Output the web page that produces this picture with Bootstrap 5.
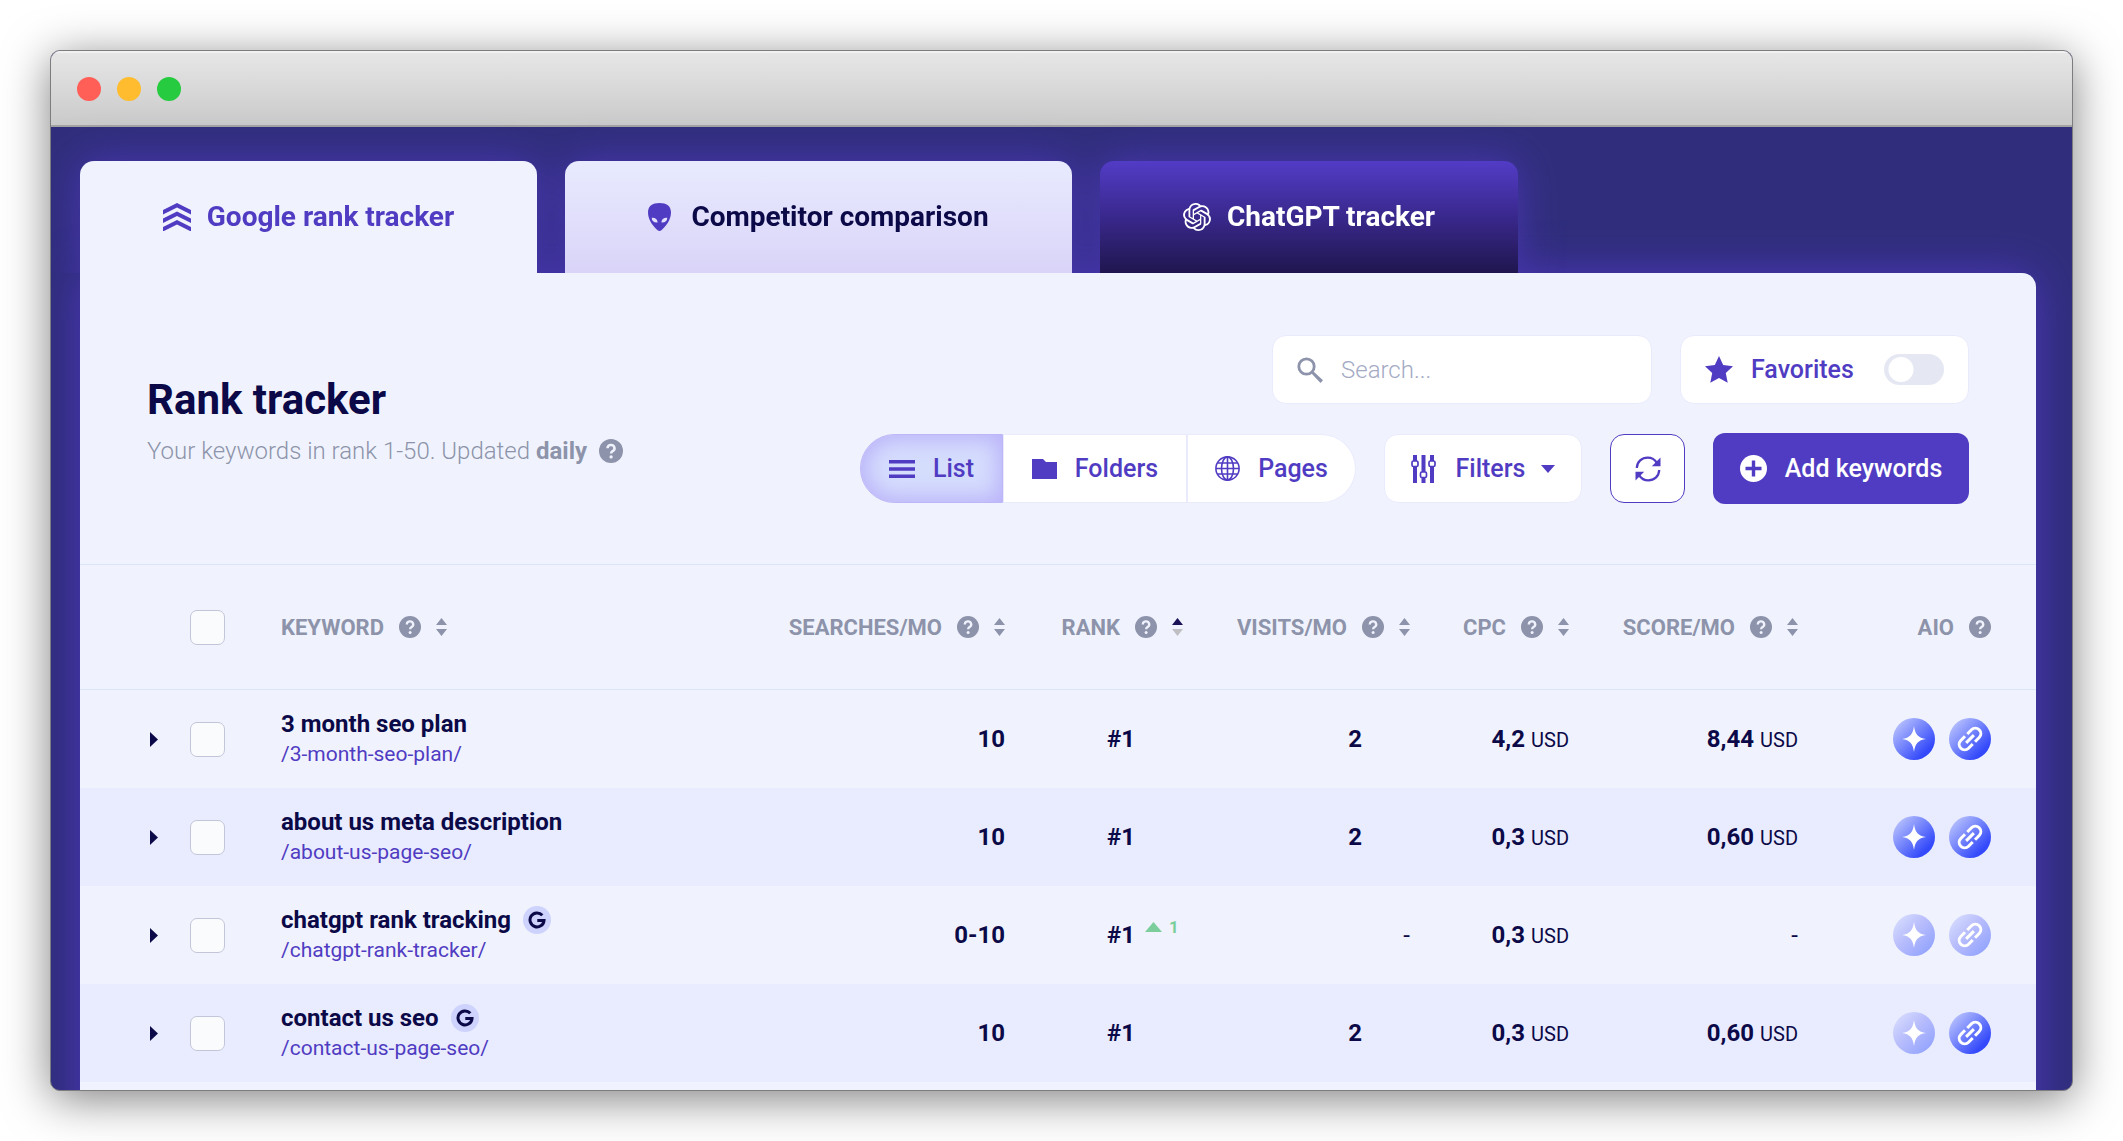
<!DOCTYPE html>
<html lang="en">
<head>
<meta charset="utf-8">
<meta name="viewport" content="width=device-width, initial-scale=1">
<title>Rank tracker</title>
<link href="https://cdn.jsdelivr.net/npm/bootstrap@5.3.0/dist/css/bootstrap.min.css" rel="stylesheet">
<style>
  :root { --violet: #503cc2; --navy: #0b0947; --muted: #8d93aa; --panel: #f0f3fd; --line: #dbe5f9; --edge: #e9ebfd; }
  body { font-family: Roboto, "Liberation Sans", sans-serif; color: var(--navy); background: #fff; padding: 50px; }
  svg { display: block; flex: none; fill: currentColor; }
  .app-window { border: 1px solid #7d7d80; border-radius: 10px; box-shadow: 0 8px 46px rgba(0,0,0,.5); background: #302e7c; }
  .title-bar { height: 76px; padding: 2px 0 0 26px; gap: 16px; background: linear-gradient(#e7e7e7, #cacaca); border-bottom: 2px solid #a3a3a3; box-shadow: inset 0 2px 0 #f1f1f1; }
  .light { width: 24px; height: 24px; border-radius: 50%; }
  .light-red { background: #ff5f57; } .light-amber { background: #febc2e; } .light-green { background: #27cb40; }
  .stage { padding: 34px 36px 0 29px; }
  .tab-strip { gap: 28px; position: relative; z-index: 1; clip-path: inset(-60px -60px 0); filter: drop-shadow(0 0 20px rgba(86,58,206,.65)); }
  .tab-item { height: 112px; gap: 16px; font-size: 28px; font-weight: 700; border-radius: 14px 14px 0 0; text-decoration: none; color: var(--navy); }
  .tab-a { width: 457px; background: var(--panel); color: var(--violet); }
  .tab-b { width: 507px; background: linear-gradient(#e8ebfe, #e0ddfb 60%, #d9d4f8); gap: 20px; }
  .tab-b svg { color: var(--violet); }
  .tab-c { width: 418px; background: linear-gradient(#523cc6, #3c2a92 45%, #20164f); color: #fff; }
  .main-panel { background: var(--panel); border-radius: 0 14px 0 0; box-shadow: 0 0 44px rgba(86,58,206,.75); }
  .panel-head { padding: 62px 67px 60px 67px; border-bottom: 1px solid var(--line); }
  .page-title { font-size: 42px; line-height: 50px; font-weight: 700; margin: 0 0 10px; padding-top: 2px; }
  .subtitle { font-size: 24px; line-height: 32px; font-weight: 300; color: var(--muted); gap: 12px; }
  .subtitle b { font-weight: 700; }
  .muted { color: var(--muted); }
  .tools { gap: 29px; }
  .tool-row { gap: 28px; }
  .tool { height: 69px; background: #fff; border: 1px solid var(--edge); border-radius: 14px; color: var(--violet); font-size: 25px; font-weight: 500; gap: 18px; white-space: nowrap; padding: 0; }
  .search-tool { width: 380px; padding: 0 24px; }
  .search-tool input { font-size: 24px; font-weight: 300; border: 0; outline: 0; min-width: 0; width: 100%; background: none; color: var(--navy); padding: 0; }
  .search-tool input::placeholder { color: #a4aac4; opacity: 1; }
  .fav-tool { width: 289px; padding: 0 24px; }
  .switch { appearance: none; width: 60px; height: 31px; border-radius: 16px; background: radial-gradient(circle at 17px 50%, #fff 12px, #e5e8f2 13px); margin: 0; }
  .seg { height: 69px; }
  .seg .tool { border-radius: 0; }
  .seg .seg-list { width: 143px; border-color: #bdb6f8; border-radius: 35px 0 0 35px; background: #d5ddfd; box-shadow: inset 0 0 22px 4px #b9b0f9; }
  .seg .seg-folders { width: 185px; border-right-width: 2px; }
  .seg .seg-pages { width: 168px; border-left: 0; border-radius: 0 35px 35px 0; }
  .filter-tool { width: 198px; gap: 20px; }
  .refresh-tool { width: 75px; border-color: var(--violet); }
  .add-tool { width: 256px; height: 71px; background: var(--violet); color: #fff; border: 0; border-radius: 12px; }
  .rank-table { width: 100%; table-layout: fixed; border-collapse: separate; border-spacing: 0; }
  .rank-table th { height: 125px; border-bottom: 1px solid var(--line); font-size: 22px; font-weight: 700; color: var(--muted); padding: 0; }
  .rank-table td { height: 98px; padding: 0; font-size: 24px; font-weight: 700; text-align: right; }
  .rank-table tbody tr:nth-child(even) { background: #e9ecfe; }
  .rank-table .last-col { padding-right: 45px; }
  .col-open { width: 110px; } .col-tick { width: 91px; } .col-search { width: 240px; } .col-rank { width: 178px; }
  .col-visits { width: 227px; } .col-cpc { width: 159px; } .col-score { width: 229px; } .col-aio { width: 238px; }
  .head-cell { gap: 15px; }
  .plain-btn { border: 0; background: none; padding: 0; color: inherit; display: block; }
  .tick { appearance: none; display: block; width: 35px; height: 35px; margin: 0; border: 1px solid #c3c6d9; border-radius: 7px; background: #fafbfd; }
  .opener { margin-left: 70px; color: var(--navy); }
  .kw { line-height: 30px; gap: 12px; }
  .kw-url { display: block; text-align: left; font-size: 21px; line-height: 30px; font-weight: 400; color: var(--violet); text-decoration: none; }
  .g-badge { width: 28px; height: 28px; border-radius: 50%; background: #cdd3fc; }
  .tail { width: 48px; }
  .rise { color: #7bce9b; font-size: 17px; line-height: 20px; gap: 7px; padding: 0 0 16px 10px; }
  .unit { font-size: 20px; font-weight: 400; margin-left: 6px; }
  .dash { font-weight: 400; }
  .aio-pair { gap: 14px; }
  .aio { width: 42px; height: 42px; border-radius: 50%; color: #fff; background: linear-gradient(135deg, #bcc5fd 8%, #3349fb 80%); }
  .aio-off { background: linear-gradient(135deg, #d6dcfd 8%, #b8bdfc 45%, #92a3fe 90%); }
</style>
<script src="https://cdn.jsdelivr.net/npm/bootstrap@5.3.0/dist/js/bootstrap.bundle.min.js"></script>
</head>
<body class="vh-100 overflow-hidden">
<svg width="0" height="0" class="position-absolute" aria-hidden="true">
  <symbol id="help" viewBox="0 0 22 22"><circle cx="11" cy="11" r="11"/><path d="M7.8 8.4a3.2 3 0 1 1 4.7 2.7c-1 .6-1.4 1-1.4 2.2" fill="none" stroke="#f0f3fd" stroke-width="2.3"/><circle cx="11.1" cy="16.4" r="1.5" fill="#f0f3fd"/></symbol>
  <symbol id="sort" viewBox="0 0 11 18"><path d="M5.500 0 11 7H0zM5.500 18 0 11h11z"/></symbol>
  <symbol id="open" viewBox="0 0 8 15"><path d="M0 0 8 7.500 0 15z"/></symbol>
  <symbol id="spark" viewBox="0 0 24 26"><path d="M12 0c1.200 8.500 4 11.800 12 13-8 1.200-10.800 4.500-12 13C10.800 17.500 8 14.200 0 13 8 11.800 10.800 8.500 12 0z"/></symbol>
  <symbol id="chain" viewBox="2.500 2.500 19 19"><g fill="none" stroke="currentColor" stroke-width="2.200" transform="rotate(-45 12 12)"><path d="M10.800 16H6.500a4 4 0 0 1 0-8h4.300M13.200 8h4.300a4 4 0 0 1 0 8h-4.300M8 12h8"/></g></symbol>
  <symbol id="gmark" viewBox="0 0 18 18"><path d="M14.300 4.300A7 7 0 1 0 16 9.500H9.300" fill="none" stroke="currentColor" stroke-width="3"/></symbol>
</svg>

<div class="app-window h-100 d-flex flex-column overflow-hidden">
  <div class="title-bar d-flex align-items-center flex-shrink-0">
    <span class="light light-red"></span><span class="light light-amber"></span><span class="light light-green"></span>
  </div>

  <div class="stage">
    <nav class="tab-strip d-flex" aria-label="Trackers">
      <a href="#" class="tab-item tab-a d-flex align-items-center justify-content-center">
        <svg width="28" height="28" viewBox="0 0 28 28"><path d="M14 0 28 7v4.500L14 4.600 0 11.500V7zM14 8.500l14 7V20l-14-6.900L0 20v-4.500zM14 17l14 7v4.500l-14-6.900L0 28.500V24z"/></svg>
        Google rank tracker</a>
      <a href="#" class="tab-item tab-b d-flex align-items-center justify-content-center">
        <svg width="23" height="28" viewBox="0 0 23 28"><path fill-rule="evenodd" d="M11.500 0C18.500 0 23 2.800 23 9.500c0 7.500-5.500 14.300-9.600 17.700a3 3 0 0 1-3.800 0C5.500 23.800 0 17 0 9.500 0 2.800 4.500 0 11.500 0zM3.800 14.800c-.2 3 2 4.900 5.700 4.600.2-3-2.200-4.900-5.700-4.600zm15.400 0c-3.500-.3-5.900 1.600-5.700 4.600 3.700.3 5.900-1.600 5.700-4.600z"/></svg>
        Competitor comparison</a>
      <a href="#" class="tab-item tab-c d-flex align-items-center justify-content-center">
        <svg width="28" height="28" viewBox="0 0 24 24"><path d="M22.2819 9.8211a5.9847 5.9847 0 0 0-.5157-4.9108 6.0462 6.0462 0 0 0-6.5098-2.9A6.0651 6.0651 0 0 0 4.9807 4.1818a5.9847 5.9847 0 0 0-3.9977 2.9 6.0462 6.0462 0 0 0 .7427 7.0966 5.98 5.98 0 0 0 .511 4.9107 6.051 6.051 0 0 0 6.5146 2.9001A5.9847 5.9847 0 0 0 13.2599 24a6.0557 6.0557 0 0 0 5.7718-4.2058 5.9894 5.9894 0 0 0 3.9977-2.9001 6.0557 6.0557 0 0 0-.7475-7.0729zm-9.022 12.6081a4.4755 4.4755 0 0 1-2.8764-1.0408l.1419-.0804 4.7783-2.7582a.7948.7948 0 0 0 .3927-.6813v-6.7369l2.02 1.1686a.071.071 0 0 1 .038.052v5.5826a4.504 4.504 0 0 1-4.4945 4.4944zm-9.6607-4.1254a4.4708 4.4708 0 0 1-.5346-3.0137l.142.0852 4.783 2.7582a.7712.7712 0 0 0 .7806 0l5.8428-3.3685v2.3324a.0804.0804 0 0 1-.0332.0615L9.74 19.9502a4.4992 4.4992 0 0 1-6.1408-1.6464zM2.3408 7.8956a4.485 4.485 0 0 1 2.3655-1.9728V11.6a.7664.7664 0 0 0 .3879.6765l5.8144 3.3543-2.0201 1.1685a.0757.0757 0 0 1-.071 0l-4.8303-2.7865A4.504 4.504 0 0 1 2.3408 7.872zm16.5963 3.8558L13.1038 8.364 15.1192 7.2a.0757.0757 0 0 1 .071 0l4.8303 2.7913a4.4944 4.4944 0 0 1-.6765 8.1042v-5.6772a.79.79 0 0 0-.407-.667zm2.0107-3.0231l-.142-.0852-4.7735-2.7818a.7759.7759 0 0 0-.7854 0L9.409 9.2297V6.8974a.0662.0662 0 0 1 .0284-.0615l4.8303-2.7866a4.4992 4.4992 0 0 1 6.6802 4.66zM8.3065 12.863l-2.02-1.1638a.0804.0804 0 0 1-.038-.0567V6.0742a4.4992 4.4992 0 0 1 7.3757-3.4537l-.142.0805L8.704 5.459a.7948.7948 0 0 0-.3927.6813zm1.0976-2.3654l2.602-1.4998 2.6069 1.4998v2.9994l-2.5974 1.4997-2.6067-1.4997Z"/></svg>
        ChatGPT tracker</a>
    </nav>

    <main class="main-panel">
      <header class="panel-head d-flex justify-content-between align-items-center">
        <div>
          <h1 class="page-title">Rank tracker</h1>
          <div class="subtitle d-flex align-items-center"><span>Your keywords in rank 1-50. Updated <b>daily</b></span><svg width="24" height="24"><use href="#help"/></svg></div>
        </div>
        <div class="tools d-flex flex-column align-items-end">
          <div class="tool-row d-flex">
            <label class="tool search-tool d-flex align-items-center">
              <svg class="muted" width="26" height="26" viewBox="0 0 26 26"><circle cx="9.500" cy="9.500" r="7.700" fill="none" stroke="currentColor" stroke-width="2.800"/><path d="M14.500 16.500l2-2L26 23.300 23.500 26z"/></svg>
              <input type="text" placeholder="Search..." aria-label="Search">
            </label>
            <label class="tool fav-tool d-flex align-items-center">
              <svg width="28" height="27" viewBox="0 0 28 27"><path d="M14 0l4.200 9 9.800 1.200-7.200 6.700 1.900 9.800L14 22l-8.700 4.700 1.900-9.800L0 10.200 9.800 9z"/></svg>
              Favorites <input type="checkbox" class="switch ms-auto">
            </label>
          </div>
          <div class="tool-row d-flex align-items-center">
            <div class="seg d-flex" role="group" aria-label="View">
              <button class="tool seg-list d-flex align-items-center justify-content-center"><svg width="26" height="18" viewBox="0 0 26 18"><path d="M0 0h26v3.500H0zM0 7.200h26v3.500H0zM0 14.500h26V18H0z"/></svg>List</button>
              <button class="tool seg-folders d-flex align-items-center justify-content-center"><svg width="25" height="20" viewBox="0 0 25 20"><path d="M0 0h11l3 3h11v17H0z"/></svg>Folders</button>
              <button class="tool seg-pages d-flex align-items-center justify-content-center"><svg width="25" height="25" viewBox="0 0 25 25"><g fill="none" stroke="currentColor" stroke-width="1.600"><circle cx="12.500" cy="12.500" r="11.600"/><ellipse cx="12.500" cy="12.500" rx="6" ry="11.600"/><path d="M12.500 1v23M1 12.500h23M2.700 7h19.600M2.700 18h19.600"/></g></svg>Pages</button>
            </div>
            <button class="tool filter-tool d-flex align-items-center justify-content-center">
              <svg width="25" height="28" viewBox="0 0 25 28"><path d="M2 0h4v28H2zM10.500 0h4v28h-4zM19 0h4v28h-4z"/><g fill="#fff" stroke="currentColor" stroke-width="1.700"><rect x="1" y="6" width="6" height="5.500" rx="1.500"/><rect x="9.500" y="17" width="6" height="5.500" rx="1.500"/><rect x="18" y="6" width="6" height="5.500" rx="1.500"/></g></svg>
              <span class="d-flex align-items-center gap-3">Filters<svg width="14" height="8" viewBox="0 0 14 8"><path d="M0 0h14L7 8z"/></svg></span>
            </button>
            <button class="tool refresh-tool d-flex align-items-center justify-content-center" aria-label="Refresh"><svg width="26" height="26" viewBox="0 0 26 26"><path d="M1.800 12C2 5.500 7 1.700 12.700 1.700c4 0 7.200 2 9 5M24.200 14c-.2 6.500-5.200 10.300-10.900 10.300-4 0-7.200-2-9-5" fill="none" stroke="currentColor" stroke-width="2.300"/><path d="M25.500 1.500v8.700h-8.700zM.5 24.500v-8.700h8.700z"/></svg></button>
            <button class="tool add-tool d-flex align-items-center justify-content-center"><svg width="27" height="27" viewBox="0 0 27 27"><circle cx="13.500" cy="13.500" r="13.500"/><path d="M13.500 5.500v16M5.500 13.500h16" stroke="#503cc2" stroke-width="3.400"/></svg>Add keywords</button>
          </div>
        </div>
      </header>

      <table class="rank-table">
        <colgroup><col class="col-open"><col class="col-tick"><col><col class="col-search"><col class="col-rank"><col class="col-visits"><col class="col-cpc"><col class="col-score"><col class="col-aio"></colgroup>
        <thead>
          <tr>
            <th></th>
            <th><input type="checkbox" class="tick" aria-label="Select all keywords"></th>
            <th><div class="head-cell d-flex align-items-center">KEYWORD<svg width="22" height="22"><use href="#help"/></svg><button class="plain-btn" aria-label="Sort"><svg width="11" height="18"><use href="#sort"/></svg></button></div></th>
            <th><div class="head-cell d-flex align-items-center justify-content-end">SEARCHES/MO<svg width="22" height="22"><use href="#help"/></svg><button class="plain-btn" aria-label="Sort"><svg width="11" height="18"><use href="#sort"/></svg></button></div></th>
            <th><div class="head-cell d-flex align-items-center justify-content-end">RANK<svg width="22" height="22"><use href="#help"/></svg><button class="plain-btn" aria-label="Sort"><svg width="11" height="18" viewBox="0 0 11 18"><path fill="#1a1157" d="M5.500 0 11 7H0z"/><path fill="#c0c0c4" d="M5.500 18 0 11h11z"/></svg></button></div></th>
            <th><div class="head-cell d-flex align-items-center justify-content-end">VISITS/MO<svg width="22" height="22"><use href="#help"/></svg><button class="plain-btn" aria-label="Sort"><svg width="11" height="18"><use href="#sort"/></svg></button></div></th>
            <th><div class="head-cell d-flex align-items-center justify-content-end">CPC<svg width="22" height="22"><use href="#help"/></svg><button class="plain-btn" aria-label="Sort"><svg width="11" height="18"><use href="#sort"/></svg></button></div></th>
            <th><div class="head-cell d-flex align-items-center justify-content-end">SCORE/MO<svg width="22" height="22"><use href="#help"/></svg><button class="plain-btn" aria-label="Sort"><svg width="11" height="18"><use href="#sort"/></svg></button></div></th>
            <th class="last-col"><div class="head-cell d-flex align-items-center justify-content-end">AIO<svg width="22" height="22"><use href="#help"/></svg></div></th>
          </tr>
        </thead>
        <tbody>
          <tr>
            <td><button class="plain-btn opener" aria-label="Expand"><svg width="8" height="15"><use href="#open"/></svg></button></td>
            <td><input type="checkbox" class="tick" aria-label="Select 3 month seo plan"></td>
            <td><div class="kw d-flex align-items-center">3 month seo plan</div><a class="kw-url" href="#">/3-month-seo-plan/</a></td>
            <td>10</td>
            <td><div class="d-flex justify-content-end">#1<span class="tail"></span></div></td>
            <td><div class="d-flex justify-content-end">2<span class="tail"></span></div></td>
            <td>4,2<span class="unit">USD</span></td>
            <td>8,44<span class="unit">USD</span></td>
            <td class="last-col"><div class="aio-pair d-flex justify-content-end"><span class="aio d-flex align-items-center justify-content-center"><svg width="24" height="26"><use href="#spark"/></svg></span><span class="aio d-flex align-items-center justify-content-center"><svg width="26" height="26"><use href="#chain"/></svg></span></div></td>
          </tr>
          <tr>
            <td><button class="plain-btn opener" aria-label="Expand"><svg width="8" height="15"><use href="#open"/></svg></button></td>
            <td><input type="checkbox" class="tick" aria-label="Select about us meta description"></td>
            <td><div class="kw d-flex align-items-center">about us meta description</div><a class="kw-url" href="#">/about-us-page-seo/</a></td>
            <td>10</td>
            <td><div class="d-flex justify-content-end">#1<span class="tail"></span></div></td>
            <td><div class="d-flex justify-content-end">2<span class="tail"></span></div></td>
            <td>0,3<span class="unit">USD</span></td>
            <td>0,60<span class="unit">USD</span></td>
            <td class="last-col"><div class="aio-pair d-flex justify-content-end"><span class="aio d-flex align-items-center justify-content-center"><svg width="24" height="26"><use href="#spark"/></svg></span><span class="aio d-flex align-items-center justify-content-center"><svg width="26" height="26"><use href="#chain"/></svg></span></div></td>
          </tr>
          <tr>
            <td><button class="plain-btn opener" aria-label="Expand"><svg width="8" height="15"><use href="#open"/></svg></button></td>
            <td><input type="checkbox" class="tick" aria-label="Select chatgpt rank tracking"></td>
            <td><div class="kw d-flex align-items-center">chatgpt rank tracking<span class="g-badge d-flex align-items-center justify-content-center"><svg width="18" height="18"><use href="#gmark"/></svg></span></div><a class="kw-url" href="#">/chatgpt-rank-tracker/</a></td>
            <td>0-10</td>
            <td><div class="d-flex justify-content-end">#1<span class="tail rise d-flex align-items-center"><svg width="17" height="10" viewBox="0 0 17 10"><path d="M8.500 0 17 10H0z"/></svg>1</span></div></td>
            <td><span class="dash">-</span></td>
            <td>0,3<span class="unit">USD</span></td>
            <td><span class="dash">-</span></td>
            <td class="last-col"><div class="aio-pair d-flex justify-content-end"><span class="aio aio-off d-flex align-items-center justify-content-center"><svg width="24" height="26"><use href="#spark"/></svg></span><span class="aio aio-off d-flex align-items-center justify-content-center"><svg width="26" height="26"><use href="#chain"/></svg></span></div></td>
          </tr>
          <tr>
            <td><button class="plain-btn opener" aria-label="Expand"><svg width="8" height="15"><use href="#open"/></svg></button></td>
            <td><input type="checkbox" class="tick" aria-label="Select contact us seo"></td>
            <td><div class="kw d-flex align-items-center">contact us seo<span class="g-badge d-flex align-items-center justify-content-center"><svg width="18" height="18"><use href="#gmark"/></svg></span></div><a class="kw-url" href="#">/contact-us-page-seo/</a></td>
            <td>10</td>
            <td><div class="d-flex justify-content-end">#1<span class="tail"></span></div></td>
            <td><div class="d-flex justify-content-end">2<span class="tail"></span></div></td>
            <td>0,3<span class="unit">USD</span></td>
            <td>0,60<span class="unit">USD</span></td>
            <td class="last-col"><div class="aio-pair d-flex justify-content-end"><span class="aio aio-off d-flex align-items-center justify-content-center"><svg width="24" height="26"><use href="#spark"/></svg></span><span class="aio d-flex align-items-center justify-content-center"><svg width="26" height="26"><use href="#chain"/></svg></span></div></td>
          </tr>
          <tr><td colspan="9"></td></tr>
        </tbody>
      </table>
    </main>
  </div>
</div>
</body>
</html>
